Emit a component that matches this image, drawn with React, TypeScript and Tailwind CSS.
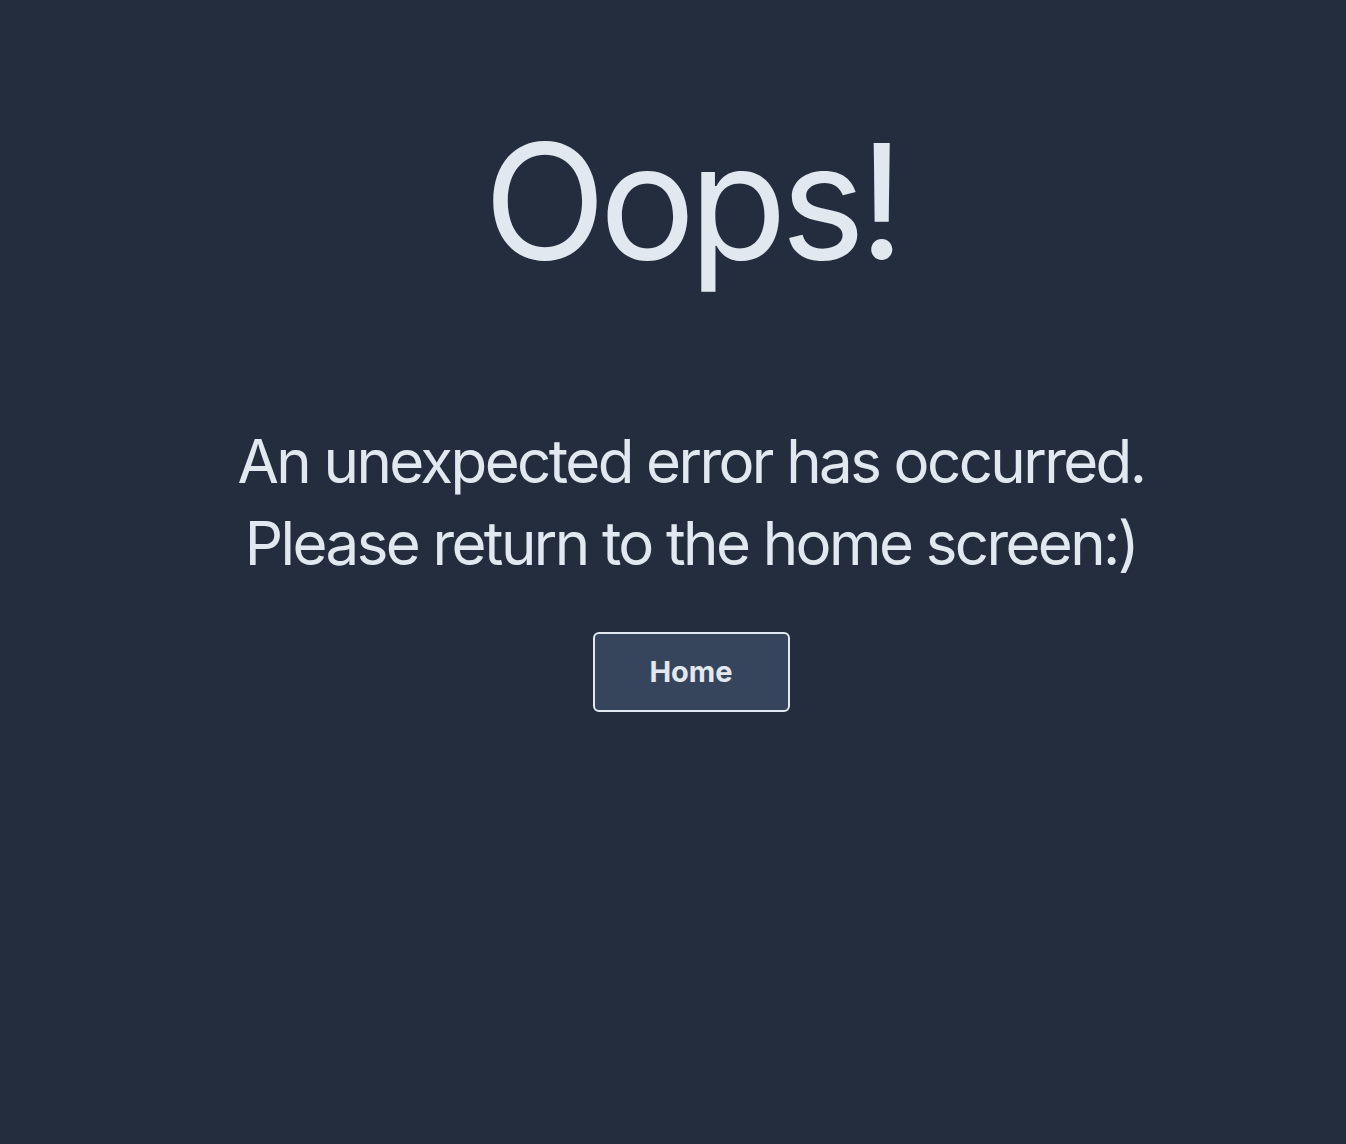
export default function App() {
  return (
    <div
      className="min-h-[1144px] w-full bg-[#242d3e] text-[#e2e8f0] flex flex-col items-center pt-[121px] pl-[36px]"
      style={{ fontFamily: 'Inter, "Noto Sans", sans-serif' }}
    >
      <h1 className="text-[160px] leading-[160px] font-normal tracking-[-0.04em]">Oops!</h1>
      <p className="mt-[139px] text-[60px] leading-[82px] text-center tracking-[-0.043em]">
        An unexpected error has occurred.
        <br />
        Please return to the home screen:)
      </p>
      <button className="mt-[48px] w-[197px] h-[80px] rounded-md border-2 border-[#e2e8f0] bg-[#36455c] text-[29px] font-bold text-[#e2e8f0]">
        Home
      </button>
    </div>
  );
}
